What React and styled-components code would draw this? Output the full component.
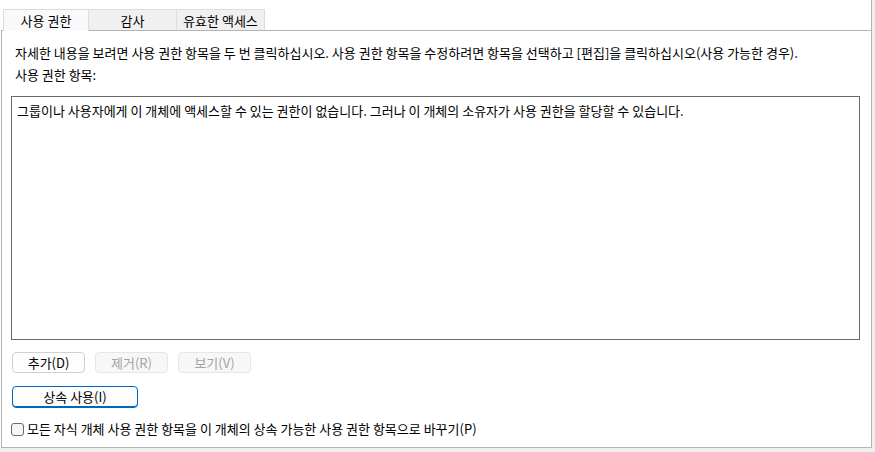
import React from "react";
import styled, { createGlobalStyle } from "styled-components";

const FS = "13px";

const Global = createGlobalStyle`
  html, body { margin: 0; padding: 0; background: #f0f0f0; }
  body { font-family: "Noto Sans CJK KR", "Noto Sans", sans-serif; }
  * { box-sizing: border-box; }
`;

const Screen = styled.div`
  width: 875px;
  height: 452px;
  background: #f0f0f0;
  overflow: hidden;
`;

const Window = styled.div`
  width: 872px;
  height: 448px;
  background: #ffffff;
  border-right: 1px solid #b4b4b4;
  display: flex;
  flex-direction: column;
`;

const TabStrip = styled.div`
  height: 30px;
  padding-left: 3px;
  display: flex;
  align-items: flex-end;
  flex-shrink: 0;
`;

const Tab = styled.div`
  width: ${(p) => p.$w}px;
  display: flex;
  align-items: center;
  justify-content: center;
  font-size: ${FS};
  color: #000;
  background: ${(p) => (p.$active ? "#f9f9f9" : "#f0f0f0")};
  border: 1px solid #dcdcdc;
  border-bottom: none;
  border-left: ${(p) => (p.$first ? "1px solid #dcdcdc" : "none")};
  position: relative;
  margin-bottom: ${(p) => (p.$active ? "-1px" : "0")};
  height: ${(p) => (p.$active ? "22px" : "21px")};
  padding-bottom: ${(p) => (p.$active ? "1px" : "0")};
  z-index: ${(p) => (p.$active ? 1 : 0)};
`;

const Panel = styled.div`
  flex: 1;
  margin-left: 1px;
  border-top: 1px solid #b4b4b4;
  border-left: 1px solid #b4b4b4;
  border-bottom: 1px solid #b4b4b4;
  padding: 14px 11px 0 9px;
  display: flex;
  flex-direction: column;
`;

const Text = styled.div`
  font-size: ${FS};
  line-height: 16px;
  color: #000;
  margin-left: ${(p) => p.$indent ?? 4}px;
  margin-bottom: ${(p) => p.$mb ?? 0}px;
  white-space: nowrap;
`;

const ListBox = styled.div`
  height: 244px;
  border: 1px solid #6a6a6a;
  padding: 6px 5px;
  font-size: ${FS};
  line-height: 16px;
  color: #000;
  margin-bottom: 12px;
  white-space: nowrap;
`;

const ButtonRow = styled.div`
  display: flex;
  gap: 10px;
  margin-left: 1px;
  margin-bottom: 13px;
`;

const Button = styled.button`
  width: ${(p) => p.$w}px;
  height: ${(p) => p.$h ?? 21}px;
  border-radius: 4px;
  border: 1px solid ${(p) => (p.$primary ? "#0067c0" : p.disabled ? "#e6e6e6" : "#d0d0d0")};
  background: ${(p) => (p.disabled ? "#f7f7f7" : "#fdfdfd")};
  color: ${(p) => (p.disabled ? "#a3a3a3" : "#000")};
  font-family: "Noto Sans CJK KR", "Noto Sans", sans-serif;
  font-size: ${FS};
  line-height: 16px;
  padding: 0;
  display: flex;
  align-items: center;
  justify-content: center;
  box-shadow: ${(p) => (p.$primary ? "inset 0 -1px 0 #0067c0" : "none")};
`;

const CheckRow = styled.label`
  display: flex;
  align-items: center;
  gap: 3px;
  font-size: ${FS};
  line-height: 16px;
  color: #000;
  white-space: nowrap;
`;

const Box = styled.span`
  width: 13px;
  height: 13px;
  border: 1px solid #6b6b6b;
  border-radius: 3px;
  background: #f6f6f6;
  flex-shrink: 0;
`;

export default function App() {
  return (
    <Screen>
      <Global />
      <Window>
        <TabStrip>
          <Tab $w={86} $active $first>사용 권한</Tab>
          <Tab $w={88}>감사</Tab>
          <Tab $w={88}>유효한 액세스</Tab>
        </TabStrip>
        <Panel>
          <Text $mb={6}>
            자세한 내용을 보려면 사용 권한 항목을 두 번 클릭하십시오. 사용 권한 항목을 수정하려면 항목을 선택하고 [편집]을 클릭하십시오(사용 가능한 경우).
          </Text>
          <Text $mb={13}>사용 권한 항목:</Text>
          <ListBox>
            그룹이나 사용자에게 이 개체에 액세스할 수 있는 권한이 없습니다. 그러나 이 개체의 소유자가 사용 권한을 할당할 수 있습니다.
          </ListBox>
          <ButtonRow>
            <Button $w={73}>추가(D)</Button>
            <Button $w={73} disabled>제거(R)</Button>
            <Button $w={73} disabled>보기(V)</Button>
          </ButtonRow>
          <ButtonRow>
            <Button $w={126} $h={22} $primary>상속 사용(I)</Button>
          </ButtonRow>
          <CheckRow>
            <Box />
            모든 자식 개체 사용 권한 항목을 이 개체의 상속 가능한 사용 권한 항목으로 바꾸기(P)
          </CheckRow>
        </Panel>
      </Window>
    </Screen>
  );
}
